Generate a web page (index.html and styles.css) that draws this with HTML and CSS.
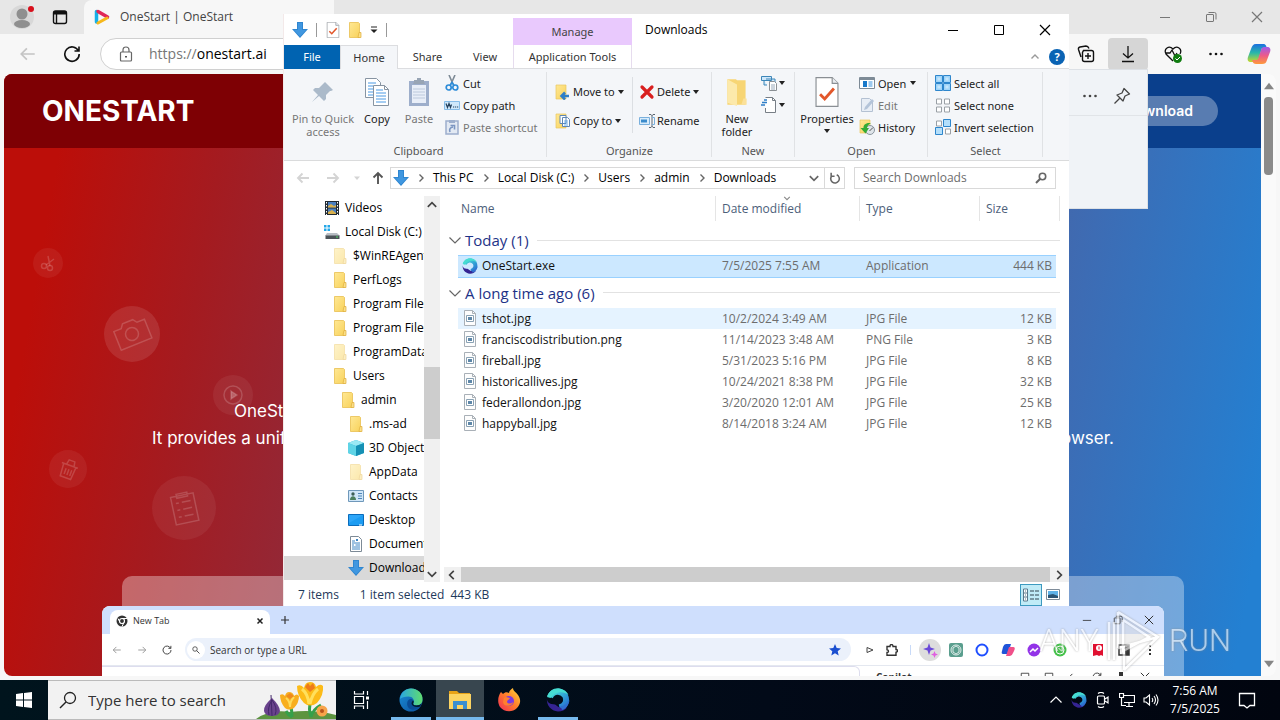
FILE: index.html
```html
<!DOCTYPE html>
<html lang="en">
<head>
<meta charset="utf-8">
<title>Downloads</title>
<link rel="stylesheet" href="styles.css">
</head>
<body>
<svg class="sprite" aria-hidden="true">
  <defs>
    <linearGradient id="gFolder" x1="0" y1="0" x2="1" y2="1"><stop offset="0" stop-color="#ffe894"/><stop offset="1" stop-color="#f8d25c"/></linearGradient>
    <linearGradient id="gEdge" x1="0" y1="0" x2="1" y2="0"><stop offset="0" stop-color="#2aa7e0"/><stop offset="1" stop-color="#5fdc70"/></linearGradient>
    <linearGradient id="gEdge2" x1="0" y1="0" x2="1" y2="1"><stop offset="0" stop-color="#1b8fd8"/><stop offset="1" stop-color="#0b4f9c"/></linearGradient>
    <linearGradient id="gOne" x1="0" y1="0" x2="1" y2="1"><stop offset="0" stop-color="#4ae0d4"/><stop offset=".6" stop-color="#2f9fd6"/><stop offset="1" stop-color="#2a6fd0"/></linearGradient>
    <linearGradient id="gFire" x1="1" y1="0" x2="0" y2="1"><stop offset="0" stop-color="#ffe03a"/><stop offset=".5" stop-color="#ff7a2a"/><stop offset="1" stop-color="#f02a5a"/></linearGradient>
    <linearGradient id="gCopA" x1="0" y1="0" x2="0" y2="1"><stop offset="0" stop-color="#1a6fe0"/><stop offset=".5" stop-color="#2ab8a8"/><stop offset="1" stop-color="#c8d82a"/></linearGradient>
    <linearGradient id="gCopB" x1="0" y1="0" x2="0" y2="1"><stop offset="0" stop-color="#a05ae8"/><stop offset=".5" stop-color="#ec5a8a"/><stop offset="1" stop-color="#ff9a3a"/></linearGradient>
  </defs>
  <symbol id="down" viewBox="0 0 16 16"><path d="M5 0h6v7h5l-8 9-8-9h5z" fill="#2f86d0"/><path d="M6 1h4v7h4l-6 6.500-6-6.500h4z" fill="#4097e0"/></symbol>
  <symbol id="folder" viewBox="0 0 16 16"><path d="M2.500.5h9l1 1v14h-10z" fill="url(#gFolder)" stroke="#e8bf50" stroke-width=".8"/><path d="M12 10.500h2V15.500h-3z" fill="#fbe08a" stroke="#dfae3a" stroke-width=".7"/></symbol>
  <symbol id="checkpage" viewBox="0 0 20 26"><path d="M.5.5h14l5 5v20H.5z" fill="#fff" stroke="#8a8f94"/><path d="M14.500.5v5h5" fill="#e8ecf0" stroke="#8a8f94"/><path d="M4 15l4 4 8-9" fill="none" stroke="#e2572b" stroke-width="2.500"/></symbol>
  <symbol id="pin" viewBox="0 0 24 24"><path d="M14 2l8 8-2 1-1 0-4 4 0 4-2 2-5-5-7 6 6-7-5-5 2-2h4l4-4z" fill="#9fb0c2"/></symbol>
  <symbol id="copy" viewBox="0 0 26 30"><g fill="#fff" stroke="#8794a2"><path d="M1.500 1.500h11l4 4v15h-15z"/><path d="M9.500 8.500h11l4 4v16h-15z"/><path d="M20.500 8.500v4h4" fill="none"/></g><path d="M4 6h8M4 9h5M4 12h5M4 15h5M4 18h5M12 13h7M12 16h10M12 19h10M12 22h10M12 25h10" stroke="#4a9ae4" /></symbol>
  <symbol id="paste" viewBox="0 0 22 30"><path d="M1 4h20v25H1z" fill="#8fa2c4"/><path d="M4 8h14v18H4z" fill="#e6edf8"/><path d="M6 5V3h3V1h4v2h3v2l1 2H5z" fill="#8997aa"/><path d="M5 12h12M5 15h12M5 18h12M5 21h12" stroke="#b4c2d8"/></symbol>
  <symbol id="cut" viewBox="0 0 16 16"><path d="M5 0l4 9M11 0L7 9" stroke="#7d8a96" stroke-width="1.600"/><g fill="none" stroke="#2e8cd8" stroke-width="1.700"><circle cx="4.700" cy="12.500" r="2.500"/><circle cx="11.300" cy="12.500" r="2.500"/><path d="M6 10.500l2-3 2 3"/></g></symbol>
  <symbol id="path" viewBox="0 0 16 16"><path d="M.5 4.500h15v8H.5z" fill="#cfe8fb" stroke="#86bce8"/><path d="M2 6.500l1.500 4 1.500-4 1.500 4 1-3M9 10h1.200M11 10h1.200M13 10h1.200" fill="none" stroke="#24405c" stroke-width="1.200"/></symbol>
  <symbol id="pshort" viewBox="0 0 16 16"><path d="M2 2h12v13H2z" fill="#dfe7f3" stroke="#8fa3c6" stroke-width="1.500"/><path d="M5 1h6v3H5z" fill="#8fa3c6"/><path d="M6 13c-1-3 0-4.500 3-5M6.500 6.500h4v4" fill="none" stroke="#6685b8" stroke-width="1.600"/></symbol>
  <symbol id="moveto" viewBox="0 0 16 16"><path d="M1 1h10v14H1z" fill="url(#gFolder)" stroke="#e8c560" stroke-width=".7"/><path d="M14 12H7M10 8.500L6.500 12l3.500 3.500" stroke="#2f7fc8" stroke-width="2.500" fill="none"/></symbol>
  <symbol id="copyto" viewBox="0 0 16 16"><path d="M1 1h10v14H1z" fill="url(#gFolder)" stroke="#e8c560" stroke-width=".7"/><path d="M5 2.500h6v8H5zM7.500 4.500h5l2 2v7h-7z" fill="#fff" stroke="#5f87b5"/><path d="M9 8h4M9 10h4M9 12h4" stroke="#4a9ae4" stroke-width=".8"/></symbol>
  <symbol id="delete" viewBox="0 0 16 16"><path d="M3 3l10 10M13 3L3 13" stroke="#d91f1f" stroke-width="3.200" stroke-linecap="round"/></symbol>
  <symbol id="rename" viewBox="0 0 16 16"><path d="M.5 4.500h10v7H.5z" fill="#d8ecfb" stroke="#7ab0dd"/><path d="M2 6.500h6v3H2z" fill="#3c8ccc"/><path d="M10 1.500h2l1 1 1-1h2M13 2v12M10 14.500h2l1-1 1 1h2" fill="none" stroke="#5a6672"/><path d="M13 4.500h2.500v7H13" fill="none" stroke="#7ab0dd"/></symbol>
  <symbol id="newfolder" viewBox="0 0 22 28"><path d="M2 2l8 0 1 1h8v23H2z" fill="#f7d574"/><path d="M2 2l9 5v20l-9-3z" fill="#fce9ab"/><path d="M17 20h3v6h-5z" fill="#fbe19a"/></symbol>
  <symbol id="newitem" viewBox="0 0 16 16"><path d="M.5 1.500h10v4H.500zM3 5v5h3M5 4h9v3" fill="#cfe8fb" stroke="#3c86b8"/><path d="M8.500 6.500h5l2 2v7h-7z" fill="#fff" stroke="#8a8f94"/><path d="M10 10h4M10 12h4M10 14h4" stroke="#9ab"/></symbol>
  <symbol id="easy" viewBox="0 0 16 16"><path d="M4.500.5h7l3 3v12h-10V11" fill="#fff" stroke="#777e86"/><path d="M11.500.500v3h3" fill="none" stroke="#777e86"/><path d="M0 8h4M1 5.500h5M3 3h3" stroke="#2f7fc8" stroke-width="1.500"/></symbol>
  <symbol id="open" viewBox="0 0 16 16"><path d="M.5 2.500h15v11H.5z" fill="#fff" stroke="#7d8a96"/><path d="M1 3h14v2H1z" fill="#7d8a96"/><path d="M4 6h4v6H4z" fill="#1979ca"/><path d="M9.500 7h4M9.500 9h4M9.500 11h4" stroke="#3a93dd"/></symbol>
  <symbol id="edit" viewBox="0 0 16 16"><path d="M2.500 1.500h8l3 3v10h-11z" fill="#e6edf6" stroke="#a9b8cc"/><path d="M5 13l1-3 7-8 2 2-7 8z" fill="#a9bcd4"/></symbol>
  <symbol id="history" viewBox="0 0 16 16"><path d="M1 1h10v13H1z" fill="url(#gFolder)" stroke="#e8c560" stroke-width=".7"/><circle cx="11" cy="11" r="4.500" fill="#dfe5ea" stroke="#8b959e"/><path d="M14 8.500l-3.500 3.500" stroke="#555" fill="none"/><path d="M12 4C6 3.500 4.500 6 4.500 9H1.500l5 5.500L10 9H8c0-2 1-3 4-5z" fill="#35ab35"/></symbol>
  <symbol id="selall" viewBox="0 0 16 16"><path d="M.5.5h7v7h-7zM8.500.5h7v7h-7zM.5 8.500h7v7h-7zM8.500 8.500h7v7h-7z" fill="#9fd4f9" stroke="#2e86cc"/><path d="M2.500 2.500h3v3h-3zM10.500 2.500h3v3h-3zM2.500 10.500h3v3h-3zM10.500 10.500h3v3h-3z" fill="#c5e6fc"/></symbol>
  <symbol id="selnone" viewBox="0 0 16 16"><path d="M1.500 2h5v5h-5zM9.500 2h5v5h-5zM1.500 10h5v5h-5zM9.500 10h5v5h-5z" fill="#fff" stroke="#9aa0a6"/></symbol>
  <symbol id="selinv" viewBox="0 0 16 16"><path d="M1.500 2h5v5h-5zM10.500 10h5v5h-5z" fill="#fff" stroke="#9aa0a6"/><path d="M8.500.5h7v7h-7zM.5 8.500h7v7h-7z" fill="#b4dffb" stroke="#2e86cc"/></symbol>
  <symbol id="caret" viewBox="0 0 6 4"><path d="M0 0h6L3 4z" fill="currentColor"/></symbol>
  <symbol id="chev" viewBox="0 0 10 10"><path d="M1.500 3.500L5 7l3.500-3.500" fill="none" stroke="currentColor" stroke-width="1.400"/></symbol>
  <symbol id="thin" viewBox="0 0 14 14"><path d="M1.500 4.500L7 10l5.500-5.500" fill="none" stroke="currentColor" stroke-width="1.200"/></symbol>
  <symbol id="arrow" viewBox="0 0 16 16"><path d="M14 8H2M7 3L2 8l5 5" fill="none" stroke="currentColor" stroke-width="1.500"/></symbol>
  <symbol id="navarrow" viewBox="0 0 14 14"><path d="M13 7H2M6.500 2.500L2 7l4.500 4.500" fill="none" stroke="currentColor" stroke-width="1.900"/></symbol>
  <symbol id="reload" viewBox="0 0 18 18"><path d="M15.500 6A7.200 7.200 0 1 0 16.200 9M16 1.500V6h-4.500" fill="none" stroke="currentColor" stroke-width="1.600"/></symbol>
  <symbol id="refresh" viewBox="0 0 14 14"><path d="M9 3.200A5 5 0 1 1 3.500 4.200M2.500 1v4h4" fill="none" stroke="currentColor" stroke-width="1.800"/></symbol>
  <symbol id="mag" viewBox="0 0 16 16"><circle cx="10" cy="6" r="4.500" fill="none" stroke="currentColor" stroke-width="1.500"/><path d="M6.700 9.300L1 15" stroke="currentColor" stroke-width="1.700"/></symbol>
  <symbol id="magbold" viewBox="0 0 12 12"><circle cx="7.500" cy="4.500" r="3.200" fill="none" stroke="currentColor" stroke-width="1.600"/><path d="M5.200 6.800L1 11" stroke="currentColor" stroke-width="2"/></symbol>
  <symbol id="videos" viewBox="0 0 16 16"><path d="M1 1h14v14H1z" fill="#222b33"/><path d="M4 2h8v5.500H4zM4 8.500h8V14H4z" fill="#4a7fc0"/><path d="M4 6l3-2 3 2 2-1v2.500H4zM4 12l4-2 4 3v1H4z" fill="#d9b04c"/><path d="M2.500 2v13M13.500 2v13" stroke="#fff" stroke-dasharray="1.500 1.500"/></symbol>
  <symbol id="disk" viewBox="0 0 16 16"><path d="M0 1h2.500v2.500H0zM3.500 1H6v2.500H3.500zM0 4.500h2.500V7H0zM3.500 4.500H6V7H3.500z" fill="#23a7e8"/><path d="M3 9h10l3 3H1z" fill="#b8bec4"/><path d="M1.500 11.500h14V15h-14z" fill="#4c5358"/><path d="M12 13h2" stroke="#4cd964"/></symbol>
  <symbol id="cube" viewBox="0 0 16 16"><path d="M8 0l8 3v10l-8 3-8-3V3z" fill="#31b6d4"/><path d="M8 0l8 3-8 3-8-3z" fill="#9be9f4"/><path d="M0 3l8 3v10l-8-3z" fill="#5fd4e6"/><path d="M8 6l8-3v10l-8 3z" fill="#1590b4"/></symbol>
  <symbol id="contact" viewBox="0 0 16 16"><path d="M.5 2.500h15v11H.5z" fill="#cfe6f8" stroke="#6f98ba"/><circle cx="5" cy="6" r="1.700" fill="#3c5f56"/><path d="M2 12c0-5 6-5 6 0z" fill="#4c7f5e"/><path d="M10 5.500h4M10 8h4M10 10.500h4" stroke="#4f86b8"/></symbol>
  <symbol id="desk" viewBox="0 0 16 16"><path d="M.5 2.500h15v11H.5z" fill="#1c9cf2" stroke="#0a6cbc"/><path d="M1 3h14L1 11z" fill="#2ea6f8"/><path d="M11 13h3" stroke="#fff"/></symbol>
  <symbol id="doc" viewBox="0 0 16 16"><path d="M2.500.5h8l3 3v12h-11z" fill="#fff" stroke="#7d8a96"/><path d="M4 5h3M4 7h8M4 9h2M7.500 9H12M4 11h8M4 13h8" stroke="#3f86c4"/><path d="M8 3h2v2H8z" fill="#3f86c4"/></symbol>
  <symbol id="img" viewBox="0 0 16 16"><path d="M2.500.5h8l3 3v12h-11z" fill="#fdfdfd" stroke="#a9b0b7"/><path d="M10.500.5v3h3" fill="none" stroke="#a9b0b7"/><path d="M4.500 5.500h7v6h-7z" fill="#fff" stroke="#8aa2b4"/><path d="M6 7h4v3H6z" fill="#5e87a8"/></symbol>
  <symbol id="one" viewBox="0 0 24 24"><path d="M4 9C7 2.500 15 2 19 7.500c2.500 5 .5 10.500-5.500 12" fill="none" stroke="url(#gOne)" stroke-width="6"/><path d="M1 9C3 3 8-.5 14 .5c4 1 7 3 8.500 6.500C17 2 8 4 4.500 10z" fill="#46dcd2"/><path d="M1 10c-1 7 4 13 11 13.500 4 0 7-1.500 9-4-4 1-8 .5-10-1.500-3-3-5-1-8-3-2-1.500-2-3-2-5z" fill="#352493"/><path d="M16 22c4-1 7-5 7.500-10-2 4-5 6-9 6z" fill="#2f6fd0"/></symbol>
  <symbol id="edge" viewBox="0 0 24 24"><circle cx="12" cy="12" r="11.500" fill="url(#gEdge2)"/><path d="M1 11C2 4 7 .5 12 .5c7 0 12 5 11.500 11 0 4-3 6-6 6-3 0-4-1-3-3 1-3-1-6-5-6-4 0-7 1-8.500 2.500z" fill="url(#gEdge)"/><path d="M14.500 14.500c-1 2 0 3 3 3 2 0 4-1 5-2-2 5-6 7-10 6-4-1-5-5-4-8 1-2 2-2.500 4-2.500 2 1 2.500 2 2 3.500z" fill="#0a4c96"/><path d="M14.500 14.500c-1 2 0 3 3 3 2 0 4-1 5-2l-1.500 3c-4 1.500-8 0-8.500-3 0-1 .5-2 1.500-3 .8.600.8 1.200.5 2z" fill="#021a2c"/></symbol>
  <symbol id="fire" viewBox="0 0 24 24"><path d="M4 4l2 2c2-2 4-2 6-1 0-2 2-4 4-5 0 3 3 4 5 7 3 4 3 9-1 13-5 5-13 4-17-1C0 14 1 8 4 4z" fill="url(#gFire)"/><circle cx="12" cy="13" r="5" fill="#7a3ae0"/><path d="M7 10c2-2 4 0 6 0-1 2-3 2-3 4 1 2 4 2 6 0 0 4-9 6-10 0z" fill="#ff7f2f"/></symbol>
  <symbol id="files" viewBox="0 0 24 24"><path d="M1 3h8l2 2h11v5H1z" fill="#e8a317"/><path d="M1 6h22v15H1z" fill="#fcd462"/><path d="M5 13h14v8h-4v-4H9v4H5z" fill="#3b8fd0"/></symbol>
  <symbol id="cop" viewBox="0 0 24 24"><path d="M9 2h7c3 0 3 2 4 4l-5 0-3 10c-1 3-2 4-4 4H4c-3 0-4-2-3-5l3-8c1-3 2-5 5-5z" fill="url(#gCopA)"/><path d="M15 22H9c-2 0-3-1-4-4h4c2 0 2-1 3-4l2-6c1-3 2-3 4-3h2c3 0 4 2 3 5l-3 8c-1 3-2 4-5 4z" fill="url(#gCopB)"/></symbol>
  <symbol id="pino" viewBox="0 0 18 18"><path d="M11 1.500L16.500 7l-4.500 2-2 5-6-6 5-2zM6.500 11.500L1.500 16.500" fill="none" stroke="currentColor" stroke-width="1.300" stroke-linejoin="round"/></symbol>
  <symbol id="x" viewBox="0 0 12 12"><path d="M1 1l10 10M11 1L1 11" stroke="currentColor" stroke-width="1.200"/></symbol>
  <symbol id="min" viewBox="0 0 12 12"><path d="M1 6.500h10" stroke="currentColor"/></symbol>
  <symbol id="max" viewBox="0 0 12 12"><path d="M1.500 1.500h9v9h-9z" fill="none" stroke="currentColor"/></symbol>
  <symbol id="restore" viewBox="0 0 12 12"><path d="M1.500 4q0-.5.5-.5h6q.5 0 .5.5v6q0 .5-.5.500H2q-.5 0-.5-.5zM3.500 1.500h6q1.500 0 1.500 1.500v5.500" fill="none" stroke="currentColor"/></symbol>
  <symbol id="dots" viewBox="0 0 16 16"><circle cx="2.500" cy="8" r="1.300" fill="currentColor"/><circle cx="8" cy="8" r="1.300" fill="currentColor"/><circle cx="13.500" cy="8" r="1.300" fill="currentColor"/></symbol>
</svg>

<main class="desktop">
  <section class="edge" aria-label="Browser">
    <div class="edge-tabs">
      <div class="edge-corner">
        <svg class="i24" viewBox="0 0 24 24"><circle cx="12" cy="12" r="12" fill="#d8d8d8"/><circle cx="12" cy="9" r="5.500" fill="#8f8f8f"/><ellipse cx="12" cy="19" rx="8" ry="4" fill="#8f8f8f"/><circle cx="21" cy="4" r="3" fill="#d8101c"/></svg>
        <svg class="i16" viewBox="0 0 16 16"><path d="M3.500 2h9Q14.500 2 14.500 4v8.500q0 2-2 2h-9q-2 0-2-2V4q0-2 2-2zM4.500 5v9" fill="none" stroke="#111" stroke-width="1.400"/><path d="M1.500 5.500V4q0-2 2-2h9q2 0 2 2v1.500z" fill="#111"/></svg>
      </div>
      <div class="edge-tab">
        <svg class="i16" viewBox="0 0 16 16"><g stroke-linecap="round" fill="none"><path d="M2.500 13V2.500" stroke="#16b0e8" stroke-width="3.500"/><path d="M4 2.500l9.500 5.500" stroke="#e02858" stroke-width="3.500"/><path d="M13 9L4 14" stroke="#f6b81c" stroke-width="3"/></g></svg>
        <span>OneStart | OneStart</span>
      </div>
      <div class="edge-controls">
        <button aria-label="Minimize"><svg class="i12"><use href="#min"/></svg></button>
        <button aria-label="Restore"><svg class="i12"><use href="#restore"/></svg></button>
        <button aria-label="Close"><svg class="i12"><use href="#x"/></svg></button>
      </div>
    </div>
    <div class="edge-bar">
      <button class="ico faint" aria-label="Back"><svg class="i18"><use href="#arrow"/></svg></button>
      <button class="ico" aria-label="Reload"><svg class="i18"><use href="#reload"/></svg></button>
      <div class="edge-url">
        <svg class="i16" viewBox="0 0 16 16"><path d="M3.500 6h9q1 0 1 1v7q0 1-1 1h-9q-1 0-1-1V7q0-1 1-1zM5 6V4q0-3 3-3t3 3v2" fill="none" stroke="#666" stroke-width="1.200"/><path d="M7 10h2v1.500H7z" fill="#555"/></svg>
        <span><i>https://</i>onestart.ai</span>
      </div>
      <div class="edge-actions">
        <button class="ico" aria-label="Collections"><svg class="i18" viewBox="0 0 18 18"><path d="M6.500 5.500h8q2 0 2 2v7q0 2-2 2h-7q-2 0-2-2v-7zM11 8v6M8 11h6M4 12L1.500 4.500Q1 2.500 3 2l6-1q2 0 3 2.500" fill="none" stroke="currentColor" stroke-width="1.400"/></svg></button>
        <button class="ico active" aria-label="Downloads"><svg class="i18" viewBox="0 0 18 18"><path d="M9 1v12M4 8.500L9 13l5-4.500M3 16.500h12" fill="none" stroke="currentColor" stroke-width="1.300"/></svg></button>
        <button class="ico" aria-label="Browser essentials"><svg class="i18" viewBox="0 0 18 18"><path d="M9 16L2 9Q0 5 3 3t6 1q3-3 6-1t1 6M2 8h4l2-3 3 6 2-3" fill="none" stroke="currentColor" stroke-width="1.300"/><circle cx="13.500" cy="13.500" r="4.500" fill="#107c10"/><path d="M11.500 13.500l1.500 1.500 3-3" fill="none" stroke="#fff"/></svg></button>
        <button class="ico" aria-label="More"><svg class="i16"><use href="#dots"/></svg></button>
        <button class="ico" aria-label="Copilot"><svg class="i24"><use href="#cop"/></svg></button>
      </div>
    </div>
    <div class="edge-view">
      <div class="site">
        <header class="site-head"><strong>ONESTART</strong><a class="site-dl" href="#download">Download</a></header>
        <svg class="bubbles" viewBox="0 0 284 360" fill="#fff" stroke="none">
          <g fill-opacity=".06"><circle cx="44" cy="63" r="15"/><circle cx="128" cy="134" r="28" fill-opacity=".1"/><circle cx="229" cy="195" r="20"/><circle cx="64" cy="269" r="19"/><circle cx="180" cy="308" r="32"/></g>
          <g fill="none" stroke="#fff" stroke-opacity=".17" stroke-width="1.500">
            <circle cx="40" cy="66" r="2.500"/><circle cx="46" cy="68" r="2.500"/><path d="M44 56l2 10M50 59l-8 6"/>
            <g transform="rotate(-22 128 134)"><path d="M112 125h8l3-4h11l3 4h8v20h-33z"/><circle cx="128" cy="134" r="6.500"/></g>
            <circle cx="229" cy="195" r="9"/><path d="M227 191l6 4-6 4z" fill="#fff" fill-opacity=".25"/>
            <g transform="rotate(20 64 269)"><path d="M58 265h13l-1 13H59zM56 265h17M61 265l1-5h6l1 5M62 269v6M65 269v6M68 269v6"/></g>
            <g transform="rotate(-12 180 308)"><path d="M169 295h23v28h-23zM175 293h11v4h-11zM173 302h3M173 309h3M173 316h3M179 302h9M179 309h9M179 316h9"/></g>
          </g>
        </svg>
        <div class="site-copy">
          <div class="copy-start"><span class="indent">OneStart</span><span>It provides a unified</span></div>
          <div class="copy-end">browser.</div>
        </div>
        <div class="stage">
          <div class="mini">
            <div class="mini-tabs">
              <div class="mini-tab">
                <svg class="i12" viewBox="0 0 12 12"><circle cx="6" cy="6" r="5.500" fill="#333"/><circle cx="6" cy="6" r="2.500" fill="#333" stroke="#fff" stroke-width="1.200"/><path d="M6 3.500h5M4 7.500L2 3.500M8 7.500L6 11.500" stroke="#fff"/></svg>
                <span>New Tab</span>
                <svg class="i8" viewBox="0 0 8 8"><path d="M1.500 1.500l5 5M6.500 1.500l-5 5" stroke="#222" stroke-width="1.500"/></svg>
              </div>
              <svg class="i8" viewBox="0 0 8 8"><path d="M4 0v8M0 4h8" stroke="#333" stroke-width="1.200"/></svg>
              <div class="mini-ctl"><svg class="i10"><use href="#min"/></svg><svg class="i10"><use href="#restore"/></svg><svg class="i10"><use href="#x"/></svg></div>
            </div>
            <div class="mini-bar">
              <svg class="i10 grey"><use href="#arrow"/></svg>
              <svg class="i10 grey flip"><use href="#arrow"/></svg>
              <svg class="i10"><use href="#reload"/></svg>
              <div class="mini-url"><b><svg class="i8 flip"><use href="#mag"/></svg></b><span>Search or type a URL</span><svg class="i12" viewBox="0 0 12 12"><path d="M6 0l1.700 4 4.300.4-3.300 2.800 1 4.300L6 9.300l-3.700 2.200 1-4.300L0 4.400 4.300 4z" fill="#1a4fd0"/></svg></div>
              <div class="mini-ext">
                <svg class="i8" viewBox="0 0 8 8"><path d="M1 1.500l6 2.500-6 2.500z" fill="none" stroke="#444"/></svg>
                <svg class="i12" viewBox="0 0 12 12"><path d="M1 2.500h3q0-2 1.500-2t1.500 2h3V5.500q1.500 0 1.500 1.300T10 8.300v3H1V8.500q1.500 0 1.500-1.300T1 5.700z" fill="none" stroke="#333" stroke-width="1.400"/></svg>
                <i></i>
                <svg class="i22" viewBox="0 0 22 22"><circle cx="11" cy="11" r="11" fill="#ddd"/><path d="M10 4l1.500 4.500L16 10l-4.500 1.500L10 16l-1.500-4.500L4 10l4.500-1.500z" fill="#6a48d8"/><path d="M15.500 12l1 2.500 2.500 1-2.500 1-1 2.500-1-2.500-2.500-1 2.500-1z" fill="#e060e0"/></svg>
                <svg class="i14" viewBox="0 0 14 14"><rect width="14" height="14" rx="2" fill="#5a9e8e"/><g fill="none" stroke="#fff" stroke-width=".8"><circle cx="7" cy="7" r="5"/><path d="M7 3l3 2v4l-3 2-3-2V5z"/></g></svg>
                <svg class="i14" viewBox="0 0 14 14"><circle cx="7" cy="7" r="5.500" fill="#fff" stroke="#1f4fff" stroke-width="2"/></svg>
                <svg class="i14" viewBox="0 0 14 14"><path d="M5 1h5L7 11H2Q0 11 1 8l1-4q1-3 3-3z" fill="#2054d8"/><path d="M9 13H5L8 4h4q3 0 1 4l-1 2q-1 3-3 3z" fill="#f0508a"/></svg>
                <svg class="i14" viewBox="0 0 14 14"><circle cx="7" cy="7" r="6.500" fill="#9333e8"/><path d="M3 9l3-3 2 2 3-3" fill="none" stroke="#fff" stroke-width="1.500"/></svg>
                <svg class="i14" viewBox="0 0 14 14"><circle cx="7" cy="7" r="6.500" fill="#46c24c"/><circle cx="7" cy="7" r="4" fill="none" stroke="#fff"/><path d="M5.500 5l3.500 3.500" stroke="#fff"/></svg>
                <svg class="i14 gap" viewBox="0 0 14 14"><path d="M2 1h10v12l-2-1-2 1-2-1-4 1z" fill="#e01030"/><circle cx="8" cy="5" r="3" fill="#fff"/><path d="M8 3.500v3" stroke="#e01030"/></svg>
                <svg class="i14" viewBox="0 0 14 14"><path d="M2 2h10v10H2z" fill="#fff" stroke="#333" stroke-width="1.500"/><path d="M8 2h4v10H8z" fill="#333"/></svg>
                <svg class="i14" viewBox="0 0 14 14"><path d="M7 2v2M7 6v2M7 10v2" stroke="#333" stroke-width="2"/></svg>
              </div>
            </div>
            <div class="mini-page"><div class="mini-sheet"></div><strong>Copilot</strong><span class="mini-acts"><svg class="i10"><use href="#max"/></svg><svg class="i10"><use href="#max"/></svg><svg class="i10"><use href="#arrow"/></svg><svg class="i10"><use href="#reload"/></svg><svg class="i10" viewBox="0 0 10 10"><path d="M3 0h4v8H3z" fill="#333"/></svg><svg class="i10"><use href="#x"/></svg></span></div>
          </div>
        </div>
      </div>
      <div class="page-scroll"><svg class="i10 up"><use href="#caret"/></svg><i></i><svg class="i10"><use href="#caret"/></svg></div>
    </div>
    <aside class="flyout" aria-label="Downloads panel"><div><svg class="i16"><use href="#dots"/></svg><svg class="i18"><use href="#pino"/></svg></div></aside>
    <div class="watermark" aria-label="ANY RUN"><span>ANY</span><svg viewBox="0 0 56 62"><path d="M3 12v38M8 12v38M12 2l40 25-34 33M12 2v36M17 10l26 17-26 14V10M12 38l40-11M18 60V40" fill="none" stroke="#fff" stroke-width="2.500"/><path d="M17 12l25 15-25 13z" fill="#fff" fill-opacity=".35"/></svg><span>RUN</span></div>
  </section>

  <section class="explorer" aria-label="Downloads">
    <div class="title">
      <div class="qat"><svg class="i16"><use href="#down"/></svg><i></i><svg class="i16"><use href="#checkpage"/></svg><svg class="i16"><use href="#folder"/></svg><svg class="i8" viewBox="0 0 8 8"><path d="M1 1h6" stroke="#222"/><path d="M.5 3.500h7L4 7z" fill="#222"/></svg><i></i></div>
      <div class="manage">Manage</div>
      <h1>Downloads</h1>
      <div class="controls">
        <button aria-label="Minimize"><svg class="i12"><use href="#min"/></svg></button><button aria-label="Maximize"><svg class="i12"><use href="#max"/></svg></button><button aria-label="Close"><svg class="i12"><use href="#x"/></svg></button>
      </div>
    </div>
    <nav class="tabs">
      <button class="file">File</button><button class="on">Home</button><button class="share">Share</button><button>View</button><button class="tools">Application Tools</button>
      <span class="tabs-end"><svg class="i10 up"><use href="#chev"/></svg><b>?</b></span>
    </nav>
    <div class="ribbon">
      <div class="group clip"><div class="cmds">
        <button class="big off w66"><svg class="i24"><use href="#pin"/></svg><span>Pin to Quick access</span></button>
        <button class="big w42"><svg class="i30"><use href="#copy"/></svg><span>Copy</span></button>
        <button class="big off w42"><svg class="i30"><use href="#paste"/></svg><span>Paste</span></button>
        <div class="col"><button><svg class="i16"><use href="#cut"/></svg>Cut</button><button><svg class="i16"><use href="#path"/></svg>Copy path</button><button class="off"><svg class="i16"><use href="#pshort"/></svg>Paste shortcut</button></div>
      </div><h2>Clipboard</h2></div>
      <div class="group org"><div class="cmds">
        <div class="col tall"><button><svg class="i16"><use href="#moveto"/></svg>Move to<svg class="car"><use href="#caret"/></svg></button><button><svg class="i16"><use href="#copyto"/></svg>Copy to<svg class="car"><use href="#caret"/></svg></button></div>
        <div class="col tall ruled"><button><svg class="i16"><use href="#delete"/></svg>Delete<svg class="car"><use href="#caret"/></svg></button><button><svg class="i16"><use href="#rename"/></svg>Rename</button></div>
      </div><h2>Organize</h2></div>
      <div class="group new"><div class="cmds">
        <button class="big w42"><svg class="i30"><use href="#newfolder"/></svg><span>New folder</span></button>
        <div class="col"><button aria-label="New item"><svg class="i16"><use href="#newitem"/></svg><svg class="car"><use href="#caret"/></svg></button><button aria-label="Easy access"><svg class="i16"><use href="#easy"/></svg><svg class="car"><use href="#caret"/></svg></button></div>
      </div><h2>New</h2></div>
      <div class="group opn"><div class="cmds">
        <button class="big w58"><svg class="i30"><use href="#checkpage"/></svg><span>Properties</span><svg class="car"><use href="#caret"/></svg></button>
        <div class="col"><button><svg class="i16"><use href="#open"/></svg>Open<svg class="car"><use href="#caret"/></svg></button><button class="off"><svg class="i16"><use href="#edit"/></svg>Edit</button><button><svg class="i16"><use href="#history"/></svg>History</button></div>
      </div><h2>Open</h2></div>
      <div class="group sel"><div class="cmds">
        <div class="col"><button><svg class="i16"><use href="#selall"/></svg>Select all</button><button><svg class="i16"><use href="#selnone"/></svg>Select none</button><button><svg class="i16"><use href="#selinv"/></svg>Invert selection</button></div>
      </div><h2>Select</h2></div>
    </div>
    <div class="address">
      <div class="hist"><svg class="i14 pale"><use href="#navarrow"/></svg><svg class="i14 pale flip"><use href="#navarrow"/></svg><svg class="i8 pale" viewBox="0 0 8 8"><path d="M1 2.500h6L4 6z" fill="currentColor"/></svg><svg class="i14 turn"><use href="#navarrow"/></svg></div>
      <div class="crumbs"><svg class="i16"><use href="#down"/></svg><svg class="i10 side"><use href="#chev"/></svg><a href="#pc">This PC</a><svg class="i10 side"><use href="#chev"/></svg><a href="#c">Local Disk (C:)</a><svg class="i10 side"><use href="#chev"/></svg><a href="#users">Users</a><svg class="i10 side"><use href="#chev"/></svg><a href="#admin">admin</a><svg class="i10 side"><use href="#chev"/></svg><a href="#dl">Downloads</a><span class="crumb-end"><svg class="i12"><use href="#chev"/></svg><button aria-label="Refresh"><svg class="i12"><use href="#refresh"/></svg></button></span></div>
      <label class="find"><input type="text" placeholder="Search Downloads" aria-label="Search Downloads"><svg class="i12"><use href="#magbold"/></svg></label>
    </div>
    <div class="body">
      <ul class="tree">
        <li><svg class="i16"><use href="#videos"/></svg>Videos</li>
        <li><svg class="i16"><use href="#disk"/></svg>Local Disk (C:)</li>
        <li class="l2 dim"><svg class="i16"><use href="#folder"/></svg>$WinREAgent</li>
        <li class="l2"><svg class="i16"><use href="#folder"/></svg>PerfLogs</li>
        <li class="l2"><svg class="i16"><use href="#folder"/></svg>Program Files</li>
        <li class="l2"><svg class="i16"><use href="#folder"/></svg>Program Files</li>
        <li class="l2 dim"><svg class="i16"><use href="#folder"/></svg>ProgramData</li>
        <li class="l2"><svg class="i16"><use href="#folder"/></svg>Users</li>
        <li class="l3"><svg class="i16"><use href="#folder"/></svg>admin</li>
        <li class="l4"><svg class="i16"><use href="#folder"/></svg>.ms-ad</li>
        <li class="l4"><svg class="i16"><use href="#cube"/></svg>3D Objects</li>
        <li class="l4 dim"><svg class="i16"><use href="#folder"/></svg>AppData</li>
        <li class="l4"><svg class="i16"><use href="#contact"/></svg>Contacts</li>
        <li class="l4"><svg class="i16"><use href="#desk"/></svg>Desktop</li>
        <li class="l4"><svg class="i16"><use href="#doc"/></svg>Documents</li>
        <li class="l4 current"><svg class="i16"><use href="#down"/></svg>Downloads</li>
      </ul>
      <div class="vscroll"><svg class="i12 up"><use href="#chev"/></svg><i></i><svg class="i12"><use href="#chev"/></svg></div>
      <div class="list">
        <table>
          <colgroup><col class="c-edge"><col><col class="c-date"><col class="c-type"><col class="c-size"><col class="c-end"></colgroup>
          <thead><tr><th colspan="2" class="first"><span>Name</span></th><th><span>Date modified<svg class="i8 sort"><use href="#chev"/></svg></span></th><th><span>Type</span></th><th colspan="2"><span>Size</span></th></tr></thead>
          <tbody>
            <tr class="sect"><th colspan="6"><div><svg class="i14"><use href="#thin"/></svg>Today (1)</div></th></tr>
            <tr class="picked"><td></td><td><svg class="i16"><use href="#one"/></svg>OneStart.exe</td><td>7/5/2025 7:55 AM</td><td>Application</td><td>444 KB</td><td></td></tr>
          </tbody>
          <tbody>
            <tr class="sect later"><th colspan="6"><div><svg class="i14"><use href="#thin"/></svg>A long time ago (6)</div></th></tr>
            <tr class="hover"><td></td><td><svg class="i16"><use href="#img"/></svg>tshot.jpg</td><td>10/2/2024 3:49 AM</td><td>JPG File</td><td>12 KB</td><td></td></tr>
            <tr><td></td><td><svg class="i16"><use href="#img"/></svg>franciscodistribution.png</td><td>11/14/2023 3:48 AM</td><td>PNG File</td><td>3 KB</td><td></td></tr>
            <tr><td></td><td><svg class="i16"><use href="#img"/></svg>fireball.jpg</td><td>5/31/2023 5:16 PM</td><td>JPG File</td><td>8 KB</td><td></td></tr>
            <tr><td></td><td><svg class="i16"><use href="#img"/></svg>historicallives.jpg</td><td>10/24/2021 8:38 PM</td><td>JPG File</td><td>32 KB</td><td></td></tr>
            <tr><td></td><td><svg class="i16"><use href="#img"/></svg>federallondon.jpg</td><td>3/20/2020 12:01 AM</td><td>JPG File</td><td>25 KB</td><td></td></tr>
            <tr><td></td><td><svg class="i16"><use href="#img"/></svg>happyball.jpg</td><td>8/14/2018 3:24 AM</td><td>JPG File</td><td>12 KB</td><td></td></tr>
          </tbody>
        </table>
        <div class="hscroll"><svg class="i12 left"><use href="#chev"/></svg><i></i><svg class="i12 side"><use href="#chev"/></svg></div>
      </div>
    </div>
    <footer class="status"><span>7 items</span><span>1 item selected</span><span>443 KB</span>
      <div class="views"><button class="on" aria-label="Details"><svg class="i18" viewBox="0 0 18 18"><path d="M1.500 3v12h4V3zM1.500 7h4M1.500 11h4M3 5h1M3 9h1M3 13h1" fill="#fff" stroke="#59788c"/><path d="M8 5h4M13 5h4M8 9h4M13 9h4M8 13h4M13 13h4" stroke="#33444f"/></svg></button><button aria-label="Thumbnails"><svg class="i14" viewBox="0 0 14 14"><path d="M.5 1.500h13v10H.5z" fill="#fff" stroke="#7f8c99"/><path d="M2 3h10v7H2z" fill="#5fb2e8"/><path d="M2 7l5-1 5 2v2H2z" fill="#2c5474"/></svg></button></div>
    </footer>
  </section>
</main>

<footer class="taskbar">
  <button class="start" aria-label="Start"><svg class="i16" viewBox="0 0 16 16"><path d="M0 2l7-1v6.500H0zM8 .9L16 0v7.500H8zM0 8.500h7V15l-7-1zM8 8.500h8V16l-8-1z" fill="#fff"/></svg></button>
  <label class="tsearch"><svg class="i18" viewBox="0 0 18 18"><circle cx="11" cy="7" r="5.500" fill="none" stroke="#222" stroke-width="1.300"/><path d="M7 11l-6 6" stroke="#222" stroke-width="1.400"/></svg><input type="text" placeholder="Type here to search" aria-label="Type here to search">
    <svg class="flowers" viewBox="0 0 80 38"><path d="M0 38Q14 28 34 31q24-3 46 3v4z" fill="#5c9440"/><path d="M36 36q0-8-2-12M55 36q-3-8 0-16M55 36q2-8 10-12M36 36q-4-2-6-6" fill="none" stroke="#35a04a" stroke-width="3"/><path d="M16 17q-9 8-8 13 1 5 8 5t8-5q0-5-8-13z" fill="#69428c"/><path d="M15 14l1 21M16 19q-5 8-3 15M16 19q6 8 3 15" stroke="#43286a" fill="none"/><path d="M24 14q3-2 5 1 1-4 4-4 4 0 5 4 3-3 5 0 0 7-5 12-5 3-9 0-5-6-5-13z" fill="#f8ae1e"/><path d="M30 17q4 3 4 9M38 16q-4 4-4 10" stroke="#ffdb5a" stroke-width="2" fill="none"/><path d="M30 15l4-3 4 3-4 3z" fill="#ee8a1e"/><path d="M41 5q4-2 7 2 1-6 6-6 5 0 6 5 4-4 7-1 1 9-6 17-7 5-13 0Q41 15 41 5z" fill="#fcbb18"/><path d="M46 8q6 5 7 15M62 8q-6 5-8 15" stroke="#ffe05c" stroke-width="3" fill="none"/><path d="M49 6l3-4 2 3 3-3 2 5-5 4z" fill="#ee7a1a"/><circle cx="66" cy="30" r="5.500" fill="#f7a44a"/><circle cx="66" cy="30" r="2" fill="#b7541a"/></svg>
  </label>
  <button class="task" aria-label="Task View"><svg class="i18" viewBox="0 0 18 18"><path d="M1.500 0v3h9V0M1.500 18v-3h9v3M1.500 5.500h9v7h-9zM14.500 0v4M14.500 10v8" fill="none" stroke="#fff" stroke-width="1.200"/><path d="M13 5.500h3v3h-3z" fill="#fff"/></svg></button>
  <button class="task run" aria-label="Edge"><svg class="i24"><use href="#edge"/></svg></button>
  <button class="task front" aria-label="File Explorer"><svg class="i24"><use href="#files"/></svg></button>
  <button class="task" aria-label="Firefox"><svg class="i24"><use href="#fire"/></svg></button>
  <button class="task run" aria-label="OneStart"><svg class="i24"><use href="#one"/></svg></button>
  <div class="tray">
    <svg class="i14 up"><use href="#thin"/></svg>
    <svg class="i16"><use href="#one"/></svg>
    <svg class="i16" viewBox="0 0 16 16"><path d="M2.500 5q0-1 1-1h5q1 0 1 1v6q0 1-1 1h-5q-1 0-1-1zM10 7l3-2v6l-3-2M3 1.500Q6-.5 9 1.500M3 14.500q3 2 6 0" fill="none" stroke="#fff" stroke-width="1.200"/></svg>
    <svg class="i16" viewBox="0 0 16 16"><path d="M5 3.500h10.500v7H5M10 11v3M7 14.500h7M.5 1.500h4v4h-4zM2.500 6v7.500H7" fill="none" stroke="#fff" stroke-width="1.200"/></svg>
    <svg class="i16" viewBox="0 0 16 16"><path d="M1 6h2l3.500-3v10L3 10H1zM9 6q1.500 2 0 4M11 4q3 4 0 8M13 2.500q4 5.500 0 11" fill="none" stroke="#fff" stroke-width="1.100"/></svg>
    <time>7:56 AM<br>7/5/2025</time>
    <svg class="i18" viewBox="0 0 18 18"><path d="M1.500 2.500h15v12H12L9 17l-3-2.500H1.500z" fill="none" stroke="#fff" stroke-width="1.300"/></svg>
  </div>
</footer>
</body>
</html>
```
FILE: styles.css
```css
* { box-sizing: border-box; }
body {
  margin: 0;
  height: 100vh;
  display: grid;
  grid-template-rows: 1fr 40px;
  overflow: hidden;
  font: 12px/16px "Open Sans", "Noto Sans", sans-serif;
  color: #000;
}
button { font: inherit; color: inherit; background: none; border: 0; padding: 0; margin: 0; }
a { color: inherit; text-decoration: none; }
svg { display: block; flex: none; }
h1, h2, ul { margin: 0; padding: 0; font-weight: 400; font-size: inherit; list-style: none; }
.sprite { position: absolute; width: 0; height: 0; }
.i8 { width: 8px; height: 8px; }
.i10 { width: 10px; height: 10px; }
.i12 { width: 12px; height: 12px; }
.i14 { width: 14px; height: 14px; }
.i16 { width: 16px; height: 16px; }
.i18 { width: 18px; height: 18px; }
.i22 { width: 22px; height: 22px; }
.i24 { width: 24px; height: 24px; }
.i30 { width: 30px; height: 30px; }
.up { transform: rotate(180deg); }
.side { transform: rotate(-90deg); }
.left { transform: rotate(90deg); }
.turn { transform: rotate(90deg); }
.flip { transform: scaleX(-1); }

.desktop { position: relative; min-height: 0; }

/* browser window */
.edge { height: 100%; display: flex; flex-direction: column; background: #f7f7f7; padding-bottom: 4px; }
.edge-tabs { display: flex; height: 34px; background: #e7e7e7; }
.edge-corner { display: flex; align-items: center; gap: 18px; width: 84px; padding-left: 10px; }
.edge-tab { display: flex; align-items: center; gap: 10px; width: 250px; padding-left: 10px; background: #f7f7f7; border-top-left-radius: 8px; color: #444; }
.edge-controls { display: flex; margin-left: auto; color: #777; }
.edge-controls button { width: 46px; display: grid; place-items: center; }
.edge-bar { display: flex; align-items: center; height: 40px; padding-left: 6px; }
.ico { width: 44px; height: 32px; display: grid; place-items: center; color: #111; border-radius: 4px; }
.faint { color: #c4c4c4; }
.edge-url { display: flex; align-items: center; gap: 15px; flex: 1; height: 32px; margin-left: 6px; padding-left: 17px; background: #fff; border: 1px solid #d0d0d0; border-radius: 16px; font-size: 14px; }
.edge-url i { font-style: normal; color: #777; }
.edge-actions { display: flex; gap: 1px; padding-left: 6px; }
.edge-actions .ico { width: 42px; }
.edge-actions .active { width: 40px; margin-right: 3px; background: #d6d6d6; }
.edge-view { flex: 1; min-height: 0; display: flex; padding: 0 4px; }
.site {
  flex: 1; min-width: 0; display: flex; flex-direction: column; position: relative; overflow: hidden;
  border-radius: 8px 0 0 8px; color: #fff; font-family: Inter, "Open Sans", sans-serif;
  background: linear-gradient(100deg, #bc0e09 5%, #a41b20 17%, #8f2b3c 30%, #3d6cb4 82%, #2380d2 98%);
}
.site-head { display: flex; align-items: center; justify-content: space-between; height: 74px; padding: 0 43px 0 38px; background: linear-gradient(90deg, #7e0004 25%, #0a3f8c 82%); }
.site-head strong { font: 700 28px/32px Inter, sans-serif; }
.site-dl { height: 30px; padding: 0 25px; border-radius: 15px; background: rgba(255, 255, 255, .32); font: 600 14px/30px Inter, sans-serif; }
.bubbles { position: absolute; left: 0; top: 126px; width: 284px; height: 360px; }
.site-copy { position: relative; display: flex; justify-content: space-between; align-items: flex-end; padding: 0 147px 0 148px; margin-top: 250px; font-size: 17px; line-height: 27px; }
.copy-start { display: flex; flex-direction: column; white-space: nowrap; }
.indent { padding-left: 82px; }
.stage { flex: 1; min-height: 0; display: flex; margin: 124px 77px 0 118px; background: rgba(255, 255, 255, .34); border-radius: 10px 10px 0 0; }
.mini { flex: 1; display: flex; flex-direction: column; margin: 30px 20px 0 -20px; overflow: hidden; background: #fff; border-radius: 8px 8px 0 0; color: #333; font: 9px/12px "Open Sans", sans-serif; }
.mini-tabs { display: flex; align-items: center; gap: 11px; height: 28px; padding-left: 8px; background: #cfdffd; }
.mini-tab { align-self: flex-end; display: flex; align-items: center; gap: 5px; width: 160px; height: 24px; padding: 0 6px 2px; background: #fff; border-radius: 8px 8px 0 0; }
.mini-tab span { flex: 1; }
.mini-ctl { display: flex; gap: 21px; margin-left: auto; padding-right: 10px; }
.mini-bar { display: flex; align-items: center; gap: 15px; height: 32px; padding: 0 7px 0 10px; border-bottom: 1px solid #e4e8f0; }
.mini-url { flex: 1; display: flex; align-items: center; gap: 5px; height: 23px; margin-left: -2px; padding: 0 10px 0 2px; border-radius: 12px; background: #ebf1fb; font-size: 10px; }
.mini-url b { width: 18px; height: 18px; border-radius: 50%; background: #fff; display: grid; place-items: center; }
.mini-url span { flex: 1; }
.mini-ext { display: flex; align-items: center; gap: 12px; height: 24px; }
.mini-ext i { width: 1px; height: 10px; background: #c8daf8; }
.mini-ext .i22 { margin: 0 -4px; }
.mini-ext .gap { margin-left: 12px; }
.mini-page { display: flex; align-items: flex-start; gap: 16px; height: 10px; overflow: hidden; }
.mini-sheet { flex: 0 1 758px; height: 20px; border: 1px solid #dde; border-left: 0; border-radius: 0 6px 0 0; }
.mini-page strong { padding-top: 5px; font-size: 10px; }
.mini-acts { display: flex; gap: 14px; margin-left: auto; padding: 6px 14px 0 0; }
.grey { color: #999; }
.page-scroll { width: 15px; display: flex; flex-direction: column; align-items: center; padding: 8px 0; background: #fafafa; color: #858585; border-radius: 0 8px 8px 0; }
.page-scroll svg { height: 8px; }
.page-scroll i { width: 9px; height: 78px; margin: 7px 0 auto; border-radius: 4px; background: #8a8a8a; }
.flyout { position: absolute; top: 69px; right: 132px; width: 240px; height: 140px; background: #f0f3f7; border: 1px solid #dde1e6; color: #444; }
.flyout div { display: flex; align-items: center; justify-content: flex-end; gap: 15px; height: 46px; padding: 6px 16px 0 0; border-bottom: 1px solid #e1e4e8; }
.watermark { position: absolute; right: 49px; bottom: 8px; display: flex; align-items: center; gap: 5px; opacity: .62; color: #fff; font: 300 31px/40px Roboto, sans-serif; filter: drop-shadow(0 0 1px #888); }
.watermark svg { width: 60px; height: 62px; }

/* explorer window */
.explorer { position: absolute; left: 283px; right: 211px; top: 14px; bottom: 74px; display: flex; flex-direction: column; background: #fff; border-left: 1px solid #f3e9e9; }
.title { display: flex; height: 31px; }
.qat { display: flex; align-items: center; gap: 8px; width: 229px; padding-left: 8px; }
.qat .i16 + .i16 { margin-left: -2px; }
.qat .i8 { margin-left: -1px; }
.qat i { width: 1px; height: 14px; background: #999; }
.manage { align-self: flex-end; width: 119px; height: 27px; text-align: center; line-height: 28px; font-size: 11px; background: #e9c9fd; color: #444; }
.title h1 { padding-left: 13px; line-height: 32px; }
.controls { display: flex; margin-left: auto; padding-right: 1px; }
.controls button { width: 46px; display: grid; place-items: center; }
.manage, .tabs, .ribbon { font-family: "Noto Sans", "Open Sans", sans-serif; }
.tabs { display: flex; height: 24px; border-bottom: 1px solid #dcdde0; font-size: 11px; color: #333; }
.tabs button { width: 56px; height: 24px; }
.tabs .file { background: #0063b1; color: #fff; }
.tabs .on { width: 58px; background: #f4f6f9; border: 1px solid #dcdde0; border-bottom: 0; }
.tabs .share { width: 59px; }
.tabs .tools { width: 119px; height: 23px; border: solid #e6dcee; border-width: 0 1px; }
.tabs-end { display: flex; align-items: center; gap: 9px; margin-left: auto; padding-right: 4px; color: #999; }
.tabs-end b { width: 16px; height: 16px; border-radius: 50%; background: #0a63b4; color: #fff; text-align: center; }
.ribbon { display: flex; height: 92px; background: #f4f6f9; border-bottom: 1px solid #dadbdc; font-size: 11px; line-height: 13px; color: #222; }
.group { display: flex; flex-direction: column; padding: 3px 0; position: relative; }
.group::after { content: ""; position: absolute; right: 0; top: 3px; bottom: 3px; width: 1px; background: #e0e2e5; }
.group h2 { text-align: center; line-height: 16px; color: #555; margin-top: 5px; }
.cmds { display: flex; flex: none; height: 66px; }
.big { display: flex; flex-direction: column; align-items: center; padding-top: 5px; }
.big .i24 { margin: 3px 0; }
.big span { margin-top: 5px; }
.big .car { margin: 4px 0 0; }
.w66 { width: 66px; }
.w42 { width: 42px; }
.w58 { width: 58px; }
.off { color: #777; }
.off svg { opacity: .85; }
.col { display: flex; flex-direction: column; }
.col button { display: flex; align-items: center; gap: 3px; height: 22px; white-space: nowrap; }
.col.tall { padding-top: 5px; }
.col.tall button { flex: none; height: 29px; }
.ruled { position: relative; padding-left: 7px; }
.ruled::before { content: ""; position: absolute; left: 0; top: 5px; width: 1px; height: 56px; background: #dcdfe3; }
.car { width: 6px; height: 4px; margin-left: 1px; }
.clip { width: 263px; padding-left: 6px; }
.clip .col { padding-left: 4px; }
.org { width: 165px; }
.org .cmds { padding-left: 8px; }
.org .col:first-child { width: 77px; }
.org button { gap: 2px; }
.new { width: 83px; padding-left: 4px; }
.new h2 { margin-left: -5px; }
.new .col { padding-left: 3px; }
.new .car { margin-left: -1px; }
.opn { width: 133px; }
.opn .cmds { padding-left: 3px; }
.opn .col { padding-left: 3px; }
.sel { width: 115px; }
.sel .cmds { padding-left: 7px; }
.address { display: flex; align-items: center; height: 34px; padding: 0 13px 0 12px; }
.hist { display: flex; align-items: center; gap: 16px; width: 94px; color: #555; }
.hist .i8 { margin: 0 -4px 0 -3px; }
.hist .turn { margin-left: -2px; }
.pale { color: #d4d4d4; }
.crumbs { flex: 1; display: flex; align-items: center; gap: 7px; height: 22px; padding-left: 2px; border: 1px solid #d9d9d9; white-space: nowrap; }
.crumbs .side { color: #666; }
.crumb-end { display: flex; align-items: center; gap: 4px; height: 100%; margin-left: auto; color: #666; }
.crumb-end button { width: 20px; height: 100%; border-left: 1px solid #d9d9d9; display: grid; place-items: center; }
.find { display: flex; align-items: center; width: 202px; height: 22px; margin-left: 9px; padding: 0 8px; border: 1px solid #d9d9d9; color: #666; }
.find input { flex: 1; min-width: 0; border: 0; padding: 0; font: inherit; outline: 0; background: none; }
.find input::placeholder { color: #6d6d6d; }
.body { flex: 1; min-height: 0; display: flex; padding-top: 1px; }
.tree { width: 140px; overflow: hidden; }
.tree li { display: flex; align-items: center; gap: 5px; height: 24px; padding-left: 40px; white-space: nowrap; }
.tree .l2 { padding-left: 48px; }
.tree .l3 { padding-left: 56px; }
.tree .l4 { padding-left: 64px; }
.dim svg { opacity: .5; }
.current { background: #d9d9d9; }
.vscroll { width: 16px; display: flex; flex-direction: column; align-items: center; padding: 3px 0 2px; background: #f0f0f0; color: #444; }
.vscroll i { width: 16px; height: 72px; margin: 156px 0 auto; background: #cdcdcd; }
.list { flex: 1; min-width: 0; display: flex; flex-direction: column; justify-content: space-between; padding-left: 4px; }
table { width: calc(100% - 9px); border-collapse: collapse; table-layout: fixed; }
.c-edge { width: 14px; }
.c-date { width: 144px; }
.c-type { width: 120px; }
.c-size { width: 76px; }
.c-end { width: 4px; }
td, th { padding: 0; text-align: left; font-weight: 400; white-space: nowrap; }
thead th { height: 30px; vertical-align: top; color: #4c607a; }
thead span { display: block; position: relative; height: 25px; line-height: 26px; padding-left: 6px; border-right: 1px solid #e5e5e5; }
thead .first span { padding-left: 17px; }
.sort { position: absolute; left: 67px; top: -2px; color: #888; }
.sect th { height: 29px; font-size: 15px; line-height: 20px; color: #1e3287; }
.sect.later th { height: 31px; }
.sect div { display: flex; align-items: center; gap: 3px; padding-left: 4px; }
.sect svg { color: #666; }
.sect div::after { content: ""; flex: 1; height: 1px; margin-left: 5px; background: #e2e2e2; }
tbody td { height: 21px; color: #6d6d6d; padding-left: 6px; }
tbody td:first-child, tbody td:last-child { padding: 0; }
tbody td:nth-child(2) { padding-left: 4px; color: #111; }
tbody td:nth-child(5) { text-align: right; padding: 0 4px 0 0; }
td svg { display: inline-block; vertical-align: middle; margin: -2px 4px 0 0; }
.picked td { height: 22px; }
.picked td:not(:first-child):not(:last-child) { background: #cce8ff; border: solid #99d1ff; border-width: 1px 0; }
.hover td:not(:first-child):not(:last-child) { background: #e5f3ff; }
.hscroll { display: flex; align-items: center; gap: 3px; height: 15px; padding: 0 4px 0 2px; background: #f0f0f0; color: #444; }
.hscroll i { flex: 1; height: 15px; background: #cdcdcd; }
.status { display: flex; align-items: center; height: 24px; padding: 2px 0 0 14px; color: #1e395b; }
.status span + span { margin-left: 21px; }
.status span:nth-child(3) { margin-left: 6px; }
.views { display: flex; height: 22px; margin-left: auto; padding-right: 9px; gap: 4px; }
.views button { display: grid; place-items: center; }
.views .on { width: 22px; border: 1px solid #3d9ac0; background: #c0ebf7; }

/* taskbar */
.taskbar { display: flex; background: linear-gradient(90deg, #00141d, #020a18 60%, #01050f); color: #fff; }
.start { width: 48px; display: grid; place-items: center; }
.tsearch { display: flex; align-items: center; width: 288px; margin-right: 2px; padding-left: 11px; background: #f2f2f2; border: 1px solid #bbb; border-width: 1px 0; color: #222; }
.tsearch input { flex: 1; min-width: 0; margin-left: 11px; padding: 0; border: 0; outline: 0; background: none; font: 15px/20px "Open Sans", sans-serif; }
.tsearch input::placeholder { color: #333; }
.flowers { width: 80px; height: 38px; }
.task { width: 48px; margin-right: 1px; display: grid; place-items: center; border: solid transparent; border-width: 3px 0; }
.run { width: 40px; margin: 0 5px 0 4px; border-bottom-color: #76b9ed; }
.front { border-bottom-color: #76b9ed; border-top-color: #38464f; background: #38464f; }
.tray { display: flex; align-items: center; gap: 8px; margin-left: auto; padding-right: 24px; }
.tray time { width: 56px; margin: 0 7px 0 0; text-align: center; line-height: 18px; }
```
